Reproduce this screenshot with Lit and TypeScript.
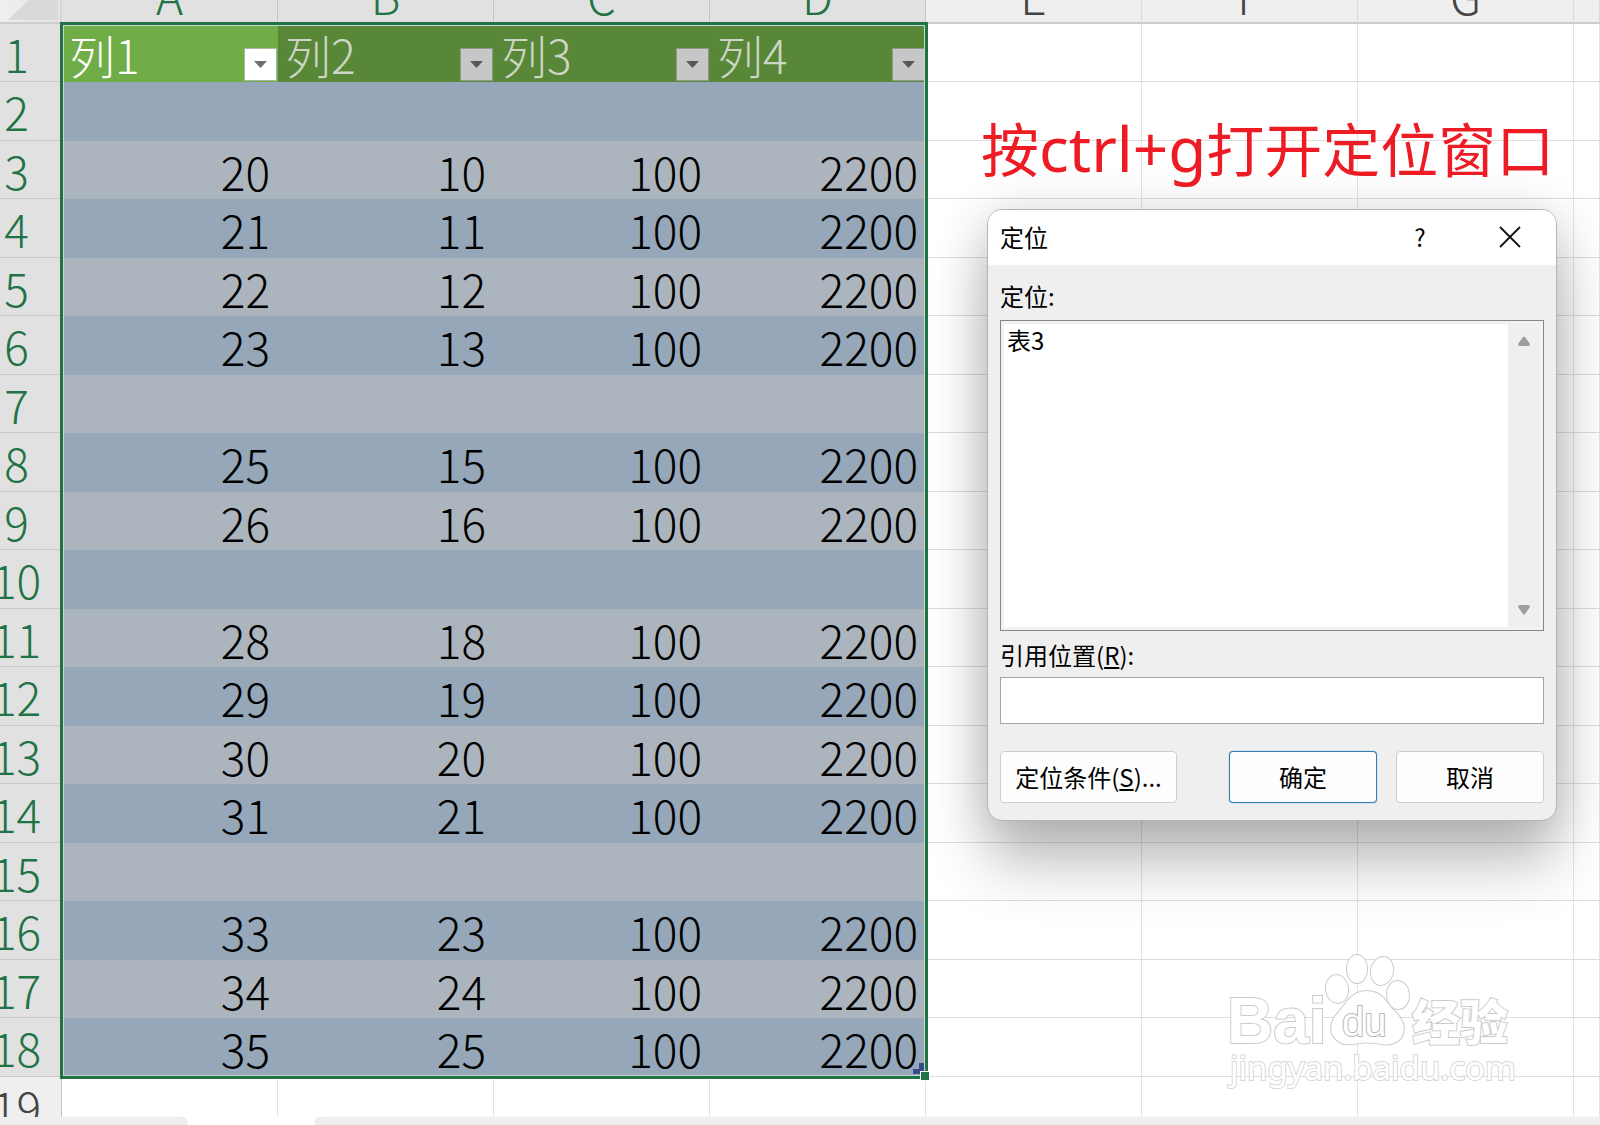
import { LitElement, html, css, svg } from "lit";
import { customElement } from "lit/decorators.js";
import { classMap } from "lit/directives/class-map.js";

const COLUMNS = ["A", "B", "C", "D", "E", "F", "G", ""];
const SELECTED_COLUMNS = 4;
const LAST_SELECTED_ROW = 18;
const TITLES = ["列1", "列2", "列3", "列4"];
const BLANK_ROWS = [2, 7, 10, 15];
const ROWS = Array.from({ length: 18 }, (_, i) => {
  const row = i + 2;
  const blank = BLANK_ROWS.includes(row) || row > LAST_SELECTED_ROW;
  return { row, values: blank ? [] : [row + 17, row + 7, 100, 2200] };
});

@customElement("sheet-grid")
class SheetGrid extends LitElement {
  static styles = css`
    :host {
      display: block;
      position: relative;
      overflow: hidden;
      font: 300 46px/56px "Noto Sans CJK SC", "Noto Sans", sans-serif;
      color: #000;
    }
    table {
      width: calc(100% + 28px);
      margin-left: -28px;
      table-layout: fixed;
      border-collapse: separate;
      border-spacing: 0;
    }
    .c-head { width: 90px; }
    .c-data { width: 216px; }
    th, td {
      box-sizing: border-box;
      padding: 0;
      vertical-align: top;
      font-weight: inherit;
      text-align: center;
      white-space: nowrap;
    }
    tr { height: 58px; }
    tr:nth-child(even) { height: 59px; }
    .letters { height: 24px; }
    .letters th {
      background: #efefef;
      border-right: 1px solid #dadada;
      border-bottom: 2px solid #cdcdcd;
      color: #444;
    }
    .letters .on {
      background: #e1e1e1;
      border-right-color: #c3c3c3;
      color: #217346;
    }
    .letter {
      display: flex;
      align-items: flex-end;
      justify-content: center;
      height: 22px;
      overflow: hidden;
      line-height: 54px;
    }
    .letters .corner {
      background: linear-gradient(90deg, #efefef 28px, #e3e3e3);
      border-right: 2px solid #d5d5d5;
    }
    .corner svg { display: block; margin-left: auto; }
    .num {
      padding-top: 1px;
      background: #efefef;
      border-right: 1px solid #c3c3c3;
      border-bottom: 1px solid #c9c9c9;
      color: #444;
    }
    .num.on { background: #e1e1e1; color: #217346; }
    td {
      padding: 2px 8px 0 0;
      text-align: right;
      border-right: 1px solid #e3e3e3;
      border-bottom: 1px solid #dedede;
    }
    td:empty { padding: 0; }
    .dark, .light, .title { border: 0; }
    .dark { background: #95a7b9; }
    .light { background: #acb5be; }
    .title {
      background: #588837;
      color: #cdd6c6;
      padding: 2px 1px 0 7px;
      text-align: left;
    }
    .title.active { background: #70ad47; color: #fff; }
    .field {
      display: flex;
      justify-content: space-between;
      align-items: flex-end;
      height: 56px;
    }
    .filter {
      display: grid;
      place-items: center;
      box-sizing: border-box;
      width: 33px;
      height: 33px;
      margin: 0 0 1px;
      padding: 0;
      border: 1px solid #8f9a86;
      background: #c7c7c7;
      color: #595959;
    }
    .active .filter { background: #fff; border-color: #a9b7a0; color: #6e6e6e; }
    .selection {
      position: absolute;
      left: 60px;
      top: 22px;
      box-sizing: border-box;
      width: 868px;
      height: 1057px;
      border: 3px solid #217346;
      box-shadow: inset 0 0 0 1px #c5d8cd;
      pointer-events: none;
    }
    .handle {
      position: absolute;
      right: -5px;
      bottom: -5px;
      width: 8px;
      height: 8px;
      border: 1px solid #fff;
      background: #217346;
    }
    .resize { position: absolute; right: 1px; bottom: 2px; display: block; }
  `;

  private title_(text: string, index: number) {
    return html`<th scope="col" class=${classMap({ title: true, active: index === 0 })}>
      <div class="field">
        <span>${text}</span>
        <button class="filter" aria-label="筛选">
          <svg width="13" height="7" viewBox="0 0 13 7"><path d="M0 0H13L6.5 7Z" fill="currentColor" /></svg>
        </button>
      </div>
    </th>`;
  }

  private row_(row: number, values: number[]) {
    const inside = row <= LAST_SELECTED_ROW;
    const even = row % 2 === 0;
    return html`<tr>
      <th scope="row" class=${classMap({ num: true, on: inside })}>${row}</th>
      ${COLUMNS.map((_, i) => {
        const on = inside && i < SELECTED_COLUMNS;
        return html`<td class=${classMap({ dark: on && even, light: on && !even })}>${values[i] ?? ""}</td>`;
      })}
    </tr>`;
  }

  render() {
    return html`
      <table>
        <colgroup>
          <col class="c-head" />
          ${COLUMNS.map((c) => html`<col class=${c ? "c-data" : "c-rest"} />`)}
        </colgroup>
        <thead>
          <tr class="letters">
            <th class="corner">
              <svg width="52" height="22" viewBox="0 0 52 22"><path d="M0 20L21 0H50V20Z" fill="#d9d9d9" /></svg>
            </th>
            ${COLUMNS.map(
              (c, i) => html`<th scope="col" class=${classMap({ on: i < SELECTED_COLUMNS })}><div class="letter">${c}</div></th>`
            )}
          </tr>
        </thead>
        <tbody>
          <tr>
            <th scope="row" class="num on">1</th>
            ${TITLES.map((t, i) => this.title_(t, i))}
            ${COLUMNS.slice(SELECTED_COLUMNS).map(() => html`<td></td>`)}
          </tr>
          ${ROWS.map((r) => this.row_(r.row, r.values))}
        </tbody>
      </table>
      <div class="selection">
        <svg class="resize" width="11" height="11" viewBox="0 0 11 11"><path d="M6 0H11V11H0V6H6Z" fill="#3b4a8c" /></svg>
        <span class="handle"></span>
      </div>
    `;
  }
}

@customElement("goto-dialog")
class GotoDialog extends LitElement {
  static styles = css`
    :host {
      display: block;
      box-sizing: border-box;
      border: 1px solid #b4b4b4;
      border-radius: 15px;
      background: #efefef;
      overflow: hidden;
      box-shadow: 0 44px 60px rgba(0, 0, 0, 0.24), 0 4px 50px rgba(0, 0, 0, 0.16);
      color: #000;
      font: 24px/32px "Noto Sans CJK SC", "Noto Sans", sans-serif;
    }
    button, input, select { font: inherit; color: inherit; box-sizing: border-box; margin: 0; }
    .bar {
      display: flex;
      align-items: center;
      height: 55px;
      padding: 0 11px 2px 12px;
      box-sizing: border-box;
      background: #fff;
    }
    .name { flex: 1; margin: 0; font: inherit; }
    .tool {
      display: grid;
      place-items: center;
      width: 70px;
      height: 40px;
      padding: 0;
      border: 0;
      background: none;
    }
    .help { margin-right: 20px; }
    .body { padding: 15px 12px 17px; }
    label { display: block; }
    .list {
      display: flex;
      box-sizing: border-box;
      height: 311px;
      margin: 8px 0;
      padding: 3px;
      border: 1px solid #85878c;
      background: #f2f2f2;
    }
    .items {
      flex: 1;
      min-width: 0;
      padding: 0;
      border: 0;
      outline: 0;
      overflow: hidden;
      background: #fff;
    }
    .items option {
      display: flex;
      align-items: center;
      height: 30px;
      min-height: 0;
      padding: 0 3px;
    }
    .scroll {
      display: flex;
      flex-direction: column;
      justify-content: space-between;
      width: 32px;
      background: #efefef;
    }
    .step {
      display: grid;
      place-items: center;
      height: 34px;
      padding: 0;
      border: 0;
      background: none;
      color: #9e9e9e;
    }
    .ref {
      display: block;
      width: 100%;
      height: 47px;
      margin: 6px 0 27px;
      padding: 0 8px;
      border: 1px solid #a5a5a5;
      background: #fff;
    }
    .actions { display: flex; gap: 19px; }
    .push {
      width: 148px;
      height: 52px;
      padding: 0;
      border: 1px solid #cecece;
      border-radius: 4px;
      background: #fdfdfd;
    }
    .special { width: 177px; margin-right: auto; }
    .ok { border-color: #2f7db9; box-shadow: 0 0 1px #2f7db9; }
  `;

  render() {
    return html`
      <div class="bar">
        <h2 class="name">定位</h2>
        <button class="tool help" aria-label="帮助">?</button>
        <button class="tool" aria-label="关闭">
          <svg width="22" height="22" viewBox="0 0 22 22"><path d="M1 1L21 21M21 1L1 21" stroke="#111" stroke-width="1.8" fill="none" /></svg>
        </button>
      </div>
      <div class="body">
        <label for="items">定位:</label>
        <div class="list">
          <select id="items" class="items" size="9"><option>表3</option></select>
          <div class="scroll">
            <button class="step" aria-label="向上">
              <svg width="12" height="10" viewBox="0 0 12 10"><path d="M5 1Q6 0 7 1L12 8Q12 10 10 10H2Q0 10 0 8Z" fill="currentColor" /></svg>
            </button>
            <button class="step" aria-label="向下">
              <svg width="12" height="10" viewBox="0 0 12 10"><path d="M5 9Q6 10 7 9L12 2Q12 0 10 0H2Q0 0 0 2Z" fill="currentColor" /></svg>
            </button>
          </div>
        </div>
        <label for="ref">引用位置(<u>R</u>):</label>
        <input id="ref" class="ref" type="text" />
        <div class="actions">
          <button class="push special">定位条件(<u>S</u>)...</button>
          <button class="push ok">确定</button>
          <button class="push">取消</button>
        </div>
      </div>
    `;
  }
}

const TOES = [
  { x: 107, y: 59, rx: 11, ry: 14, r: -8 },
  { x: 127, y: 39, rx: 10, ry: 14, r: 0 },
  { x: 152, y: 41, rx: 11, ry: 14, r: 12 },
  { x: 168, y: 65, rx: 11, ry: 14, r: -4 },
];

@customElement("brand-mark")
class BrandMark extends LitElement {
  static styles = css`
    :host { display: block; }
    svg { display: block; overflow: visible; }
    .line { fill: #fff; stroke: #cbcbcb; stroke-width: 2px; paint-order: stroke; }
    .latin { font: 700 64px "Liberation Sans", Arial, sans-serif; }
    .du { font: 400 40px "Liberation Sans", Arial, sans-serif; stroke: #b8b8b8; }
    .han { font: 900 48px "Noto Sans CJK SC", sans-serif; }
    .site { font: 400 33px "Noto Sans", sans-serif; stroke: #d8d8d8; }
  `;

  render() {
    return html`<svg width="300" height="150" viewBox="0 0 300 150" role="img" aria-label="Baidu经验">
      <text class="line latin" x="-3" y="113">Bai</text>
      ${TOES.map((t) => svg`<ellipse class="line" cx=${t.x} cy=${t.y} rx=${t.rx} ry=${t.ry} transform="rotate(${t.r} ${t.x} ${t.y})" />`)}
      <path class="line" d="M118 70Q126 61 137 61Q149 61 156 71Q162 79 168 85Q178 97 171 108Q164 116 152 114Q137 111 123 114Q108 116 102 104Q99 92 108 83Q113 77 118 70Z" />
      <text class="line du" x="112" y="106">du</text>
      <text class="line han" x="182" y="110">经验</text>
      <text class="line site" x="0" y="150">jingyan.baidu.com</text>
    </svg>`;
  }
}

@customElement("app-root")
class AppRoot extends LitElement {
  static styles = css`
    :host {
      display: flex;
      flex-direction: column;
      position: relative;
      height: 100vh;
      overflow: hidden;
      background: #fff;
    }
    .sheet { flex: 1; min-height: 0; }
    .tabs { display: flex; gap: 128px; height: 8px; background: #fff; }
    .nav { width: 187px; background: #efefef; border-radius: 0 6px 0 0; box-shadow: 0 0 1px #bbb; }
    .strip { flex: 1; background: #efefef; border-radius: 6px 0 0 0; box-shadow: 0 0 1px #bbb; }
    .note {
      position: absolute;
      left: 981px;
      top: 104px;
      margin: 0;
      font: 400 58px/88px "Noto Sans", "Noto Sans CJK SC", sans-serif;
      color: #ed1c24;
      white-space: nowrap;
    }
    .keys { font: inherit; font-size: 62px; }
    .dialog { position: absolute; left: 987px; top: 209px; width: 570px; }
    .brand { position: absolute; left: 1230px; top: 930px; }
  `;

  render() {
    return html`
      <sheet-grid class="sheet"></sheet-grid>
      <div class="tabs"><div class="nav"></div><div class="strip"></div></div>
      <goto-dialog class="dialog" role="dialog" aria-label="定位"></goto-dialog>
      <p class="note">按<kbd class="keys">ctrl+g</kbd>打开定位窗口</p>
      <brand-mark class="brand"></brand-mark>
    `;
  }
}
